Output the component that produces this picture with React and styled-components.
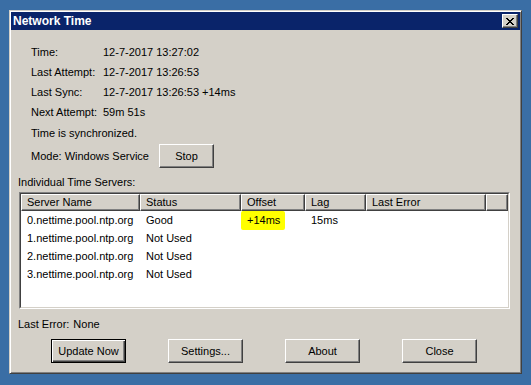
import React from 'react'
import styled, { createGlobalStyle, css } from 'styled-components'

const GlobalStyle = createGlobalStyle`
  body {
    margin: 0;
    background: #3a6ea5;
    font-family: "Liberation Sans", Arial, sans-serif;
    font-size: 11px;
    color: #000;
  }
`

const raised = css`
  border: 1px solid;
  border-color: #fff #404040 #404040 #fff;
  box-shadow: inset -1px -1px #808080, inset 1px 1px #d4d0c8;
`

const Window = styled.div`
  box-sizing: border-box;
  width: 513px;
  height: 364px;
  margin: 10px 0 0 9px;
  padding: 1px;
  background: #d4d0c8;
  border: 1px solid;
  border-color: #d4d0c8 #404040 #404040 #d4d0c8;
  box-shadow: inset 1px 1px #fff, inset -1px -1px #808080;
  display: flex;
  flex-direction: column;
`
const TitleBar = styled.div`
  height: 18px;
  background: #0a246a;
  display: flex;
  align-items: center;
  justify-content: space-between;
  padding: 0 2px 0 2px;
`
const Title = styled.div`
  color: #fff;
  font-weight: bold;
  font-size: 12px;
  line-height: 18px;
  padding-top: 0px;
`
const CaptionButton = styled.div`
  box-sizing: border-box;
  width: 16px;
  height: 14px;
  background: #d4d0c8;
  ${raised}
  display: flex;
  align-items: center;
  justify-content: center;
`
const Client = styled.div`
  flex: 1;
  display: flex;
  flex-direction: column;
  padding: 0 8px 0 7px;
`
const InfoGrid = styled.div`
  display: grid;
  grid-template-columns: 72px auto;
  line-height: 20px;
  margin: 12px 0 0 13px;
`
const StatusLine = styled.div`
  line-height: 20px;
  margin: 1px 0 0 13px;
`
const ModeRow = styled.div`
  display: flex;
  align-items: center;
  gap: 10px;
  height: 24px;
  margin: 1px 0 0 13px;
`
const Button = styled.button`
  box-sizing: border-box;
  width: ${props => props.width || 75}px;
  height: 24px;
  padding: 0;
  background: #d4d0c8;
  font-family: "Liberation Sans", Arial, sans-serif;
  font-size: 11px;
  color: #000;
  ${raised}
  ${props => props.primary && css`
    border: 1px solid #000;
    box-shadow: inset 1px 1px #fff, inset -1px -1px #404040, inset -2px -2px #808080;
  `}
`
const SectionLabel = styled.div`
  line-height: 14px;
  margin-top: ${props => props.top}px;
`
const ListBox = styled.div`
  box-sizing: border-box;
  width: 491px;
  height: 117px;
  margin: 3px 0 0 1px;
  border: 1px solid;
  border-color: #808080 #fff #fff #808080;
  display: flex;
`
const ListInner = styled.div`
  flex: 1;
  border: 1px solid;
  border-color: #404040 #d4d0c8 #d4d0c8 #404040;
  background: #fff;
  display: flex;
  flex-direction: column;
`
const columns = '119px 101px 64px 61px 120px 1fr'
const HeaderRow = styled.div`
  display: grid;
  grid-template-columns: ${columns};
  height: 17px;
`
const HeaderCell = styled.div`
  box-sizing: border-box;
  background: #d4d0c8;
  ${raised}
  padding-left: 5px;
  line-height: 15px;
  white-space: nowrap;
`
const Row = styled.div`
  display: grid;
  grid-template-columns: ${columns};
  height: 18px;
  line-height: 18px;
`
const Cell = styled.div`
  padding-left: 6px;
  white-space: nowrap;
`
const Highlight = styled.span`
  display: inline-block;
  margin-left: -6px;
  padding: 0 5px 0 6px;
  height: 19px;
  background: #ffff00;
  border-radius: 2px;
`
const LastError = styled.div`
  display: flex;
  gap: 4px;
  line-height: 14px;
  margin-top: 8px;
`
const ButtonBar = styled.div`
  display: flex;
  gap: 42px;
  margin: 8px 0 0 33px;
`

const CloseGlyph = () => (
  <svg width="8" height="7" viewBox="0 0 8 7" shapeRendering="crispEdges">
    <path
      d="M0 0h2v1H0zM6 0h2v1H6zM1 1h2v1H1zM5 1h2v1H5zM2 2h4v1H2zM3 3h2v1H3zM2 4h4v1H2zM1 5h2v1H1zM5 5h2v1H5zM0 6h2v1H0zM6 6h2v1H6z"
      fill="#000"
    />
  </svg>
)

const servers = [
  { name: '0.nettime.pool.ntp.org', status: 'Good', offset: '+14ms', lag: '15ms' },
  { name: '1.nettime.pool.ntp.org', status: 'Not Used' },
  { name: '2.nettime.pool.ntp.org', status: 'Not Used' },
  { name: '3.nettime.pool.ntp.org', status: 'Not Used' },
]

const info = [
  ['Time:', '12-7-2017 13:27:02'],
  ['Last Attempt:', '12-7-2017 13:26:53'],
  ['Last Sync:', '12-7-2017 13:26:53 +14ms'],
  ['Next Attempt:', '59m 51s'],
]

export default function App() {
  return (
    <>
      <GlobalStyle />
      <Window>
        <TitleBar>
          <Title>Network Time</Title>
          <CaptionButton><CloseGlyph /></CaptionButton>
        </TitleBar>
        <Client>
          <InfoGrid>
            {info.map(([label, value]) => (
              <React.Fragment key={label}>
                <div>{label}</div>
                <div>{value}</div>
              </React.Fragment>
            ))}
          </InfoGrid>
          <StatusLine>Time is synchronized.</StatusLine>
          <ModeRow>
            <span>Mode: Windows Service</span>
            <Button width={55}>Stop</Button>
          </ModeRow>
          <SectionLabel top={7}>Individual Time Servers:</SectionLabel>
          <ListBox>
            <ListInner>
              <HeaderRow>
                <HeaderCell>Server Name</HeaderCell>
                <HeaderCell>Status</HeaderCell>
                <HeaderCell>Offset</HeaderCell>
                <HeaderCell>Lag</HeaderCell>
                <HeaderCell>Last Error</HeaderCell>
                <HeaderCell />
              </HeaderRow>
              {servers.map(s => (
                <Row key={s.name}>
                  <Cell>{s.name}</Cell>
                  <Cell>{s.status}</Cell>
                  <Cell>{s.offset ? <Highlight>{s.offset}</Highlight> : null}</Cell>
                  <Cell>{s.lag}</Cell>
                  <Cell />
                  <Cell />
                </Row>
              ))}
            </ListInner>
          </ListBox>
          <LastError>
            <span>Last Error:</span>
            <span>None</span>
          </LastError>
          <ButtonBar>
            <Button primary>Update Now</Button>
            <Button>Settings...</Button>
            <Button>About</Button>
            <Button>Close</Button>
          </ButtonBar>
        </Client>
      </Window>
    </>
  )
}
